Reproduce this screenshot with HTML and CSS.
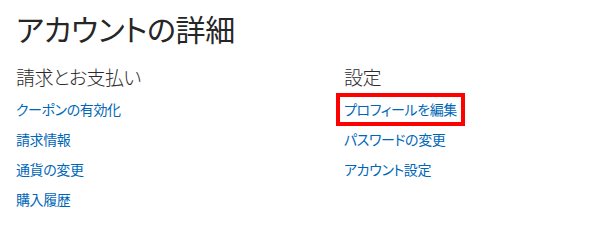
FILE: index.html
```html
<!DOCTYPE html>
<html lang="ja">
<head>
<meta charset="utf-8">
<link rel="stylesheet" href="styles.css">
</head>
<body>
<main class="page">
  <h1 class="title">アカウントの詳細</h1>
  <div class="cols">
    <section class="col">
      <h2 class="col-head">請求とお支払い</h2>
      <ul class="links">
        <li><a href="#">クーポンの有効化</a></li>
        <li><a href="#">請求情報</a></li>
        <li><a href="#">通貨の変更</a></li>
        <li><a href="#">購入履歴</a></li>
      </ul>
    </section>
    <section class="col">
      <h2 class="col-head">設定</h2>
      <ul class="links">
        <li><a href="#" class="marked">プロフィールを編集</a></li>
        <li><a href="#">パスワードの変更</a></li>
        <li><a href="#">アカウント設定</a></li>
      </ul>
    </section>
  </div>
</main>
</body>
</html>
```
FILE: styles.css
```css
html, body {
  margin: 0;
  background: #ffffff;
}
body {
  font-family: "Noto Sans CJK JP", "Noto Sans", sans-serif;
  font-feature-settings: "palt";
  color: #262626;
}
.page {
  padding: 6px 16px 0 16px;
}
.title {
  margin: 0;
  font-size: 30px;
  line-height: 44px;
  font-weight: 400;
  letter-spacing: -0.3px;
  color: #262626;
}
.cols {
  display: grid;
  grid-template-columns: 328px 1fr;
  margin-top: 13px;
}
.col-head {
  margin: 0;
  font-size: 19px;
  line-height: 28px;
  font-weight: 300;
  letter-spacing: -0.6px;
  color: #2b2b2b;
}
.links {
  list-style: none;
  margin: 3px 0 0 0;
  padding: 0;
}
.links li {
  height: 30px;
  display: flex;
  align-items: center;
}
.links a {
  font-size: 14px;
  line-height: 17px;
  letter-spacing: -0.4px;
  color: #0067b8;
  text-decoration: none;
}
.links a.marked {
  display: inline-block;
  outline: 4px solid #ff0000;
  outline-offset: 4px;
}
```
